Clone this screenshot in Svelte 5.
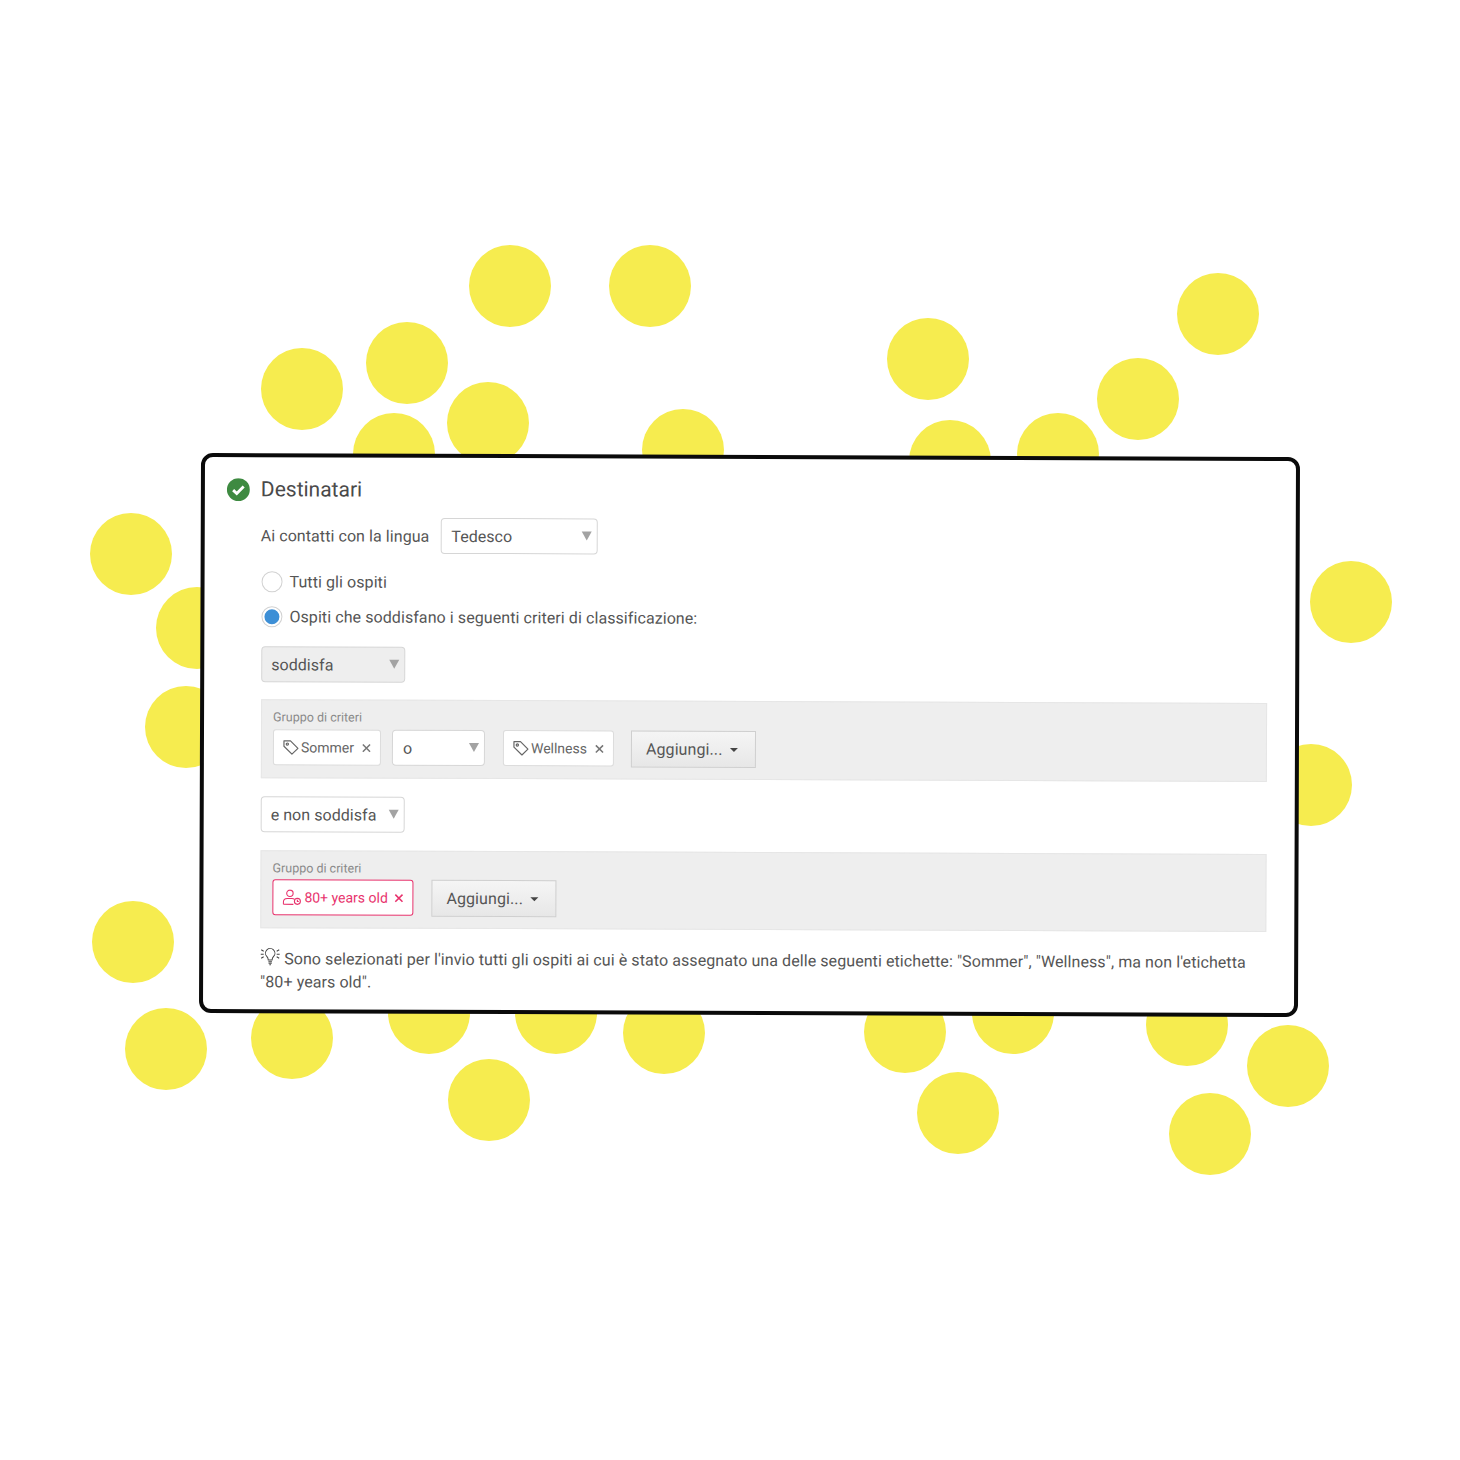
<script lang="ts">
	// backdrop dots, centre coordinates on the canvas
	const dots = [
		[510, 286], [650, 286], [1218, 314], [928, 359], [1138, 399], [302, 389], [407, 363], [488, 423],
		[394, 454], [683, 450], [950, 461], [1058, 454], [131, 554], [197, 628], [186, 727], [1351, 602],
		[1311, 785], [133, 942], [166, 1049], [292, 1038], [429, 1013], [556, 1013], [664, 1033], [905, 1032],
		[1013, 1013], [1187, 1025], [1288, 1066], [489, 1100], [958, 1113], [1210, 1134]
	];
</script>

{#snippet tagIcon()}
	<svg class="ico" viewBox="0 0 16 16" width="16" height="16" fill="none" stroke="currentColor" stroke-width="1.2" stroke-linejoin="round">
		<path d="M1 1.5 h6.5 l7.5 7.5 -6 5.8 -8 -7.8z" />
		<circle cx="4.4" cy="4.8" r="1.1" />
	</svg>
{/snippet}

{#snippet closeIcon()}
	<svg class="x" viewBox="0 0 10 10" width="9" height="9" stroke="currentColor" stroke-width="1.7">
		<path d="M1 1 L9 9 M9 1 L1 9" />
	</svg>
{/snippet}

{#snippet addButton()}
	<div class="add">Aggiungi... <i class="caret"></i></div>
{/snippet}

<div class="stage">
	{#each dots as [x, y]}
		<span class="dot" style="left:{x - 41}px; top:{y - 41}px"></span>
	{/each}

	<section class="card">
		<header class="title">
			<svg viewBox="0 0 24 24" width="23" height="23">
				<circle cx="12" cy="12" r="12" fill="#3e8a41" />
				<path d="M6.5 12.5 L10.3 16 L17.5 8.8" fill="none" stroke="#fff" stroke-width="3" />
			</svg>
			<h2>Destinatari</h2>
		</header>

		<div class="body">
			<div class="lang">
				<span>Ai contatti con la lingua</span>
				<div class="select lang-select">Tedesco<i class="arrow"></i></div>
			</div>

			<label class="radio first"><i class="ring"></i>Tutti gli ospiti</label>
			<label class="radio second"><i class="ring on"></i>Ospiti che soddisfano i seguenti criteri di classificazione:</label>

			<div class="select cond grey">soddisfa<i class="arrow"></i></div>

			<div class="group">
				<div class="group-label">Gruppo di criteri</div>
				<div class="items">
					<div class="chip sommer">{@render tagIcon()}<span>Sommer</span>{@render closeIcon()}</div>
					<div class="select op">o<i class="arrow"></i></div>
					<div class="chip wellness">{@render tagIcon()}<span>Wellness</span>{@render closeIcon()}</div>
					{@render addButton()}
				</div>
			</div>

			<div class="select cond second-cond">e non soddisfa<i class="arrow"></i></div>

			<div class="group second-group">
				<div class="group-label">Gruppo di criteri</div>
				<div class="items">
					<div class="chip pink">
						<svg class="ico" viewBox="0 0 19 16" width="19" height="16" fill="none" stroke="currentColor" stroke-width="1.1">
							<circle cx="7.5" cy="4" r="3.2" />
							<path d="M1 15 v-2 c0 -2.5 2 -3.8 4 -3.8 h4.5 c1 0 2 .3 2.6 .9 M1 15 h10" />
							<circle cx="15" cy="12" r="3" />
							<path d="M15 10.5 v1.6 h1.4" />
						</svg>
						<span>80+ years old</span>{@render closeIcon()}
					</div>
					{@render addButton()}
				</div>
			</div>

			<p class="hint">
				<svg viewBox="0 0 20 20" width="20" height="20" fill="none" stroke="#444" stroke-width="1">
					<path d="M6.6 9.2 a4.7 4.7 0 1 1 6.8 0 c-.9 1 -1.4 2 -1.5 3.6 h-3.8 c-.1 -1.6 -.6 -2.6 -1.5 -3.6z" />
					<path d="M8.2 14.4 h3.6 M8.4 16 h3.2 M9.2 17.6 h1.6" />
					<path d="M1 2.5 l2.5 1.5 M.5 7 h3 M1 11 l2.5 -1.5 M19 2.5 l-2.5 1.5 M19.5 7 h-3 M19 11 l-2.5 -1.5" />
				</svg>Sono selezionati per l'invio tutti gli ospiti ai cui è stato assegnato una delle seguenti etichette: "Sommer", "Wellness", ma non l'etichetta "80+ years old".
			</p>
		</div>
	</section>
</div>

<style>
	:global(body) {
		background: #fff;
		font-family: Roboto, "Liberation Sans", sans-serif;
		color: #555;
	}
	.stage {
		position: relative;
		width: 1460px;
		height: 1460px;
		overflow: hidden;
		padding: 455px 0 0 200px;
		box-sizing: border-box;
	}
	.dot {
		position: absolute;
		width: 82px;
		height: 82px;
		border-radius: 50%;
		background: #f6ec4f;
	}
	.card {
		position: relative;
		box-sizing: border-box;
		width: 1099px;
		height: 560px;
		padding: 17px 28px 0 23px;
		background: #fff;
		border: 4px solid #0a0a0a;
		border-radius: 12px;
		transform: rotate(0.21deg);
	}
	.title {
		display: flex;
		align-items: center;
		gap: 11px;
		height: 30px;
		margin-left: -1px;
	}
	h2 {
		margin: 0;
		font-size: 21px;
		font-weight: 400;
		color: #4a4a4a;
	}
	.body {
		margin-left: 34px;
		font-size: 16px;
	}
	.lang {
		display: flex;
		align-items: center;
		gap: 11px;
		margin: 13px 0 0 -1px;
		letter-spacing: 0.07px;
	}
	.select {
		position: relative;
		box-sizing: border-box;
		display: flex;
		align-items: center;
		height: 36px;
		padding-left: 9px;
		background: #fff;
		border: 1px solid #d6d6d6;
		border-radius: 4px;
		font-size: 16px;
		letter-spacing: 0.05px;
		color: #555;
	}
	.arrow {
		position: absolute;
		right: 5px;
		top: 12px;
		border-left: 5px solid transparent;
		border-right: 5px solid transparent;
		border-top: 9px solid #a3a3a3;
	}
	.lang-select {
		width: 157px;
		padding-left: 10px;
	}
	.radio {
		display: flex;
		align-items: center;
		gap: 7px;
		height: 21px;
		letter-spacing: 0.08px;
		color: #555;
	}
	.radio.first {
		margin-top: 18px;
	}
	.radio.second {
		margin-top: 14px;
	}
	.ring {
		box-sizing: border-box;
		display: flex;
		align-items: center;
		justify-content: center;
		width: 21px;
		height: 21px;
		border: 1px solid #d2d2d2;
		border-radius: 50%;
		background: #fff;
	}
	.ring.on::after {
		content: "";
		width: 15px;
		height: 15px;
		border-radius: 50%;
		background: #3d8fd6;
	}
	.cond {
		width: 144px;
		margin-top: 19px;
	}
	.cond.grey {
		background: #eeeeee;
	}
	.second-cond {
		margin-top: 18px;
	}
	.group {
		box-sizing: border-box;
		height: 79px;
		margin-top: 17px;
		padding: 9px 11px 0;
		background: #eeeeee;
		border: 1px solid #e6e6e6;
	}
	.second-group {
		height: 78px;
		margin-top: 18px;
	}
	.second-group .items {
		margin-top: 4px;
	}
	.group-label {
		font-size: 12.5px;
		line-height: 15px;
		color: #8a8a8a;
	}
	.items {
		display: flex;
		margin-top: 5px;
	}
	.chip {
		box-sizing: border-box;
		display: flex;
		align-items: center;
		height: 36px;
		padding: 0 9px;
		background: #fff;
		border: 1px solid #dcdcdc;
		border-radius: 3px;
		font-size: 14px;
		color: #666;
	}
	.chip .ico {
		margin-right: 2px;
		flex: none;
	}
	.chip .x {
		margin-left: auto;
		color: #777;
		flex: none;
	}
	.sommer {
		width: 108px;
	}
	.op {
		width: 93px;
		margin-left: 11px;
		padding-left: 10px;
	}
	.wellness {
		width: 111px;
		margin-left: 18px;
	}
	.pink {
		width: 141px;
		border-color: #e8336d;
		color: #e8336d;
	}
	.pink .ico {
		margin-right: 3px;
	}
	.pink .x {
		color: #e8336d;
	}
	.add {
		box-sizing: border-box;
		display: flex;
		align-items: center;
		gap: 7px;
		width: 125px;
		height: 37px;
		margin-left: 17px;
		padding-left: 14px;
		background: linear-gradient(#f5f5f5, #e7e7e7);
		border: 1px solid #cfcfcf;
		font-size: 16px;
		letter-spacing: 0.1px;
		color: #555;
	}
	.pink + .add {
		margin-left: 18px;
	}
	.caret {
		border-left: 4.5px solid transparent;
		border-right: 4.5px solid transparent;
		border-top: 4px solid #444;
	}
	.hint {
		width: 1000px;
		margin: 19px 0 0;
		font-size: 16px;
		line-height: 23px;
		letter-spacing: 0.08px;
		color: #555;
	}
	.hint svg {
		vertical-align: -3px;
		margin-right: 4px;
	}
</style>
